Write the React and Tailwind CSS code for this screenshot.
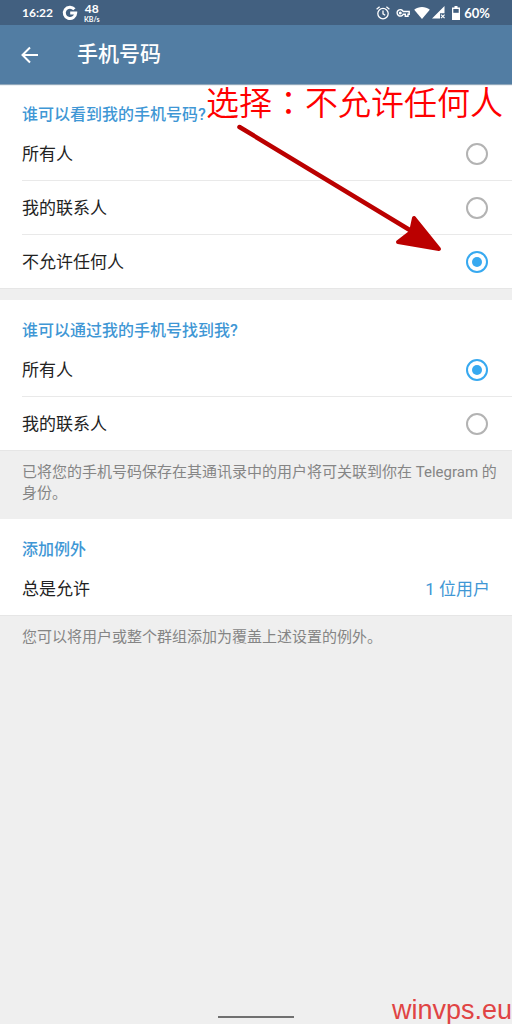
import { useState } from 'react';

function StatusBar() {
  return (
    <div className="flex h-[25px] items-center justify-between bg-[#426080] px-[22px] font-['Lato','Noto_Sans_CJK_SC',sans-serif] text-xs font-bold text-white">
      <div className="flex items-center">
        <span className="w-10 text-xs leading-4">16:22</span>
        <svg className="size-4" viewBox="0 0 16 16" fill="none" stroke="#fff" strokeWidth="3" aria-hidden="true">
          <path d="M12.4 4.2A5.7 5.7 0 1 0 13.7 8H8.2" />
        </svg>
        <span className="ml-1.5 flex flex-col items-center">
          <span className="text-xs leading-3">48</span>
          <span className="text-[7px] leading-[8px]">KB/s</span>
        </span>
      </div>
      <div className="flex items-center">
        <svg className="size-[14px]" viewBox="0 0 14 14" fill="none" stroke="#fff" strokeWidth="1.3" aria-hidden="true">
          <circle cx="7" cy="7.6" r="5.2" />
          <path d="M7 4.6v3.3l2.2 1.4M.6 3.3 3.6.8M13.400 3.300 10.400.8" />
        </svg>
        <svg className="ml-1.5 h-2.5 w-[14px]" viewBox="0 0 14 10" fill="none" stroke="#fff" strokeWidth="1.4" aria-hidden="true">
          <path d="M7.2 3.5H13.2V6.2H12V8.2H9.3V6.2H7.2A3.2 3.2 0 1 1 7.2 3.5Z" />
          <circle cx="4.3" cy="5" r=".8" />
        </svg>
        <svg className="ml-1 h-3 w-4" viewBox="0 0 16 12" fill="#fff" aria-hidden="true">
          <path d="M8 12 .2 2.700C4.600-.800 11.400-.800 15.800 2.700Z" />
        </svg>
        <svg className="ml-0.5 size-[13px]" viewBox="0 0 13 13" aria-hidden="true">
          <path d="M12.500 0V7.200H8V12.500H0Z" fill="#fff" />
          <path d="m9 8.600 3.600 3.600m0-3.600L9 12.200" stroke="#fff" strokeWidth="1.200" />
        </svg>
        <svg className="ml-[7px] h-[14px] w-2" viewBox="0 0 8 14" aria-hidden="true">
          <path d="M2.500 0h3v1.400H8V14H0V1.400h2.500Z" fill="#fff" />
          <path d="M1.300 3h5.400v3.800H1.300Z" fill="#426080" />
        </svg>
        <span className="ml-1 text-[13px] leading-4">60%</span>
      </div>
    </div>
  );
}

function Section({ title, children }) {
  return (
    <section className="border-b border-[#e6e6e6] bg-white">
      <h2 className="px-[22px] pt-[19px] text-base leading-6 font-medium text-[#3f97d5]">{title}</h2>
      {children}
    </section>
  );
}

function Choices({ name, title, options, initial }) {
  const [value, setValue] = useState(initial);
  return (
    <Section title={title}>
      <div className="divide-y divide-[#e9e9e9] pl-[22px]" role="radiogroup" aria-label={title}>
        {options.map((option) => (
          <label key={option} className="flex h-[53px] items-center justify-between pr-6 text-[17px] text-[#222] not-last:box-content">
            <span className="pt-0.5">{option}</span>
            <input
              type="radio"
              name={name}
              checked={value === option}
              onChange={() => setValue(option)}
              className="grid size-[22px] appearance-none place-items-center rounded-full border-2 border-[#b3b3b3] before:size-2.5 before:rounded-full checked:border-[#37a9f0] checked:before:bg-[#37a9f0]"
            />
          </label>
        ))}
      </div>
    </Section>
  );
}

function Annotation() {
  return (
    <div className="pointer-events-none absolute top-0 right-0 w-[306px]">
      <p className="text-[33px] leading-10 whitespace-nowrap text-[#ff0000] font-[350]">
        选择<span lang="zh-TW" className="font-['Noto_Sans_CJK_TC',sans-serif] leading-none">：</span>不允许任何人
      </p>
      <svg className="absolute top-10 left-[31px] h-[128px] w-[205px]" viewBox="0 0 205 128" aria-hidden="true">
        <path d="M2.500 3 176 108" stroke="#bb0000" strokeWidth="4.500" strokeLinecap="round" />
        <path d="M177 94 202 125 161 118 174 108Z" fill="#bb0000" stroke="#bb0000" strokeWidth="4" strokeLinejoin="round" />
      </svg>
    </div>
  );
}

export default function App() {
  return (
    <div className="relative flex min-h-screen flex-col bg-[#efefef] font-['Roboto','Noto_Sans_CJK_SC',sans-serif]" lang="zh-CN">
      <StatusBar />
      <header className="relative z-10 flex h-[59px] items-center bg-[#527da3] pl-[21px] text-white shadow-[0_1px_1px_#8fa6ba]">
        <button type="button" aria-label="返回" className="size-[18px]">
          <svg viewBox="0 0 18 18" fill="none" stroke="#fff" strokeWidth="2" aria-hidden="true">
            <path d="M17 9H2M9 1.500 1.500 9 9 16.500" />
          </svg>
        </button>
        <h1 className="ml-[38px] text-[21px] font-medium">手机号码</h1>
      </header>
      <main className="relative">
        <Choices name="visibility" title="谁可以看到我的手机号码?" options={['所有人', '我的联系人', '不允许任何人']} initial="不允许任何人" />
        <div className="h-[11px]" />
        <Choices name="discovery" title="谁可以通过我的手机号找到我?" options={['所有人', '我的联系人']} initial="所有人" />
        <p className="pt-[11px] pr-2 pb-[15px] pl-[22px] text-[15px] leading-[21px] text-[#858585]">
          已将您的手机号码保存在其通讯录中的用户将可关联到你在 Telegram 的身份。
        </p>
        <Section title="添加例外">
          <button type="button" className="flex h-[53px] w-full items-center justify-between px-[22px] pt-0.5 text-[17px] text-[#222]">
            <span>总是允许</span>
            <span className="text-[#3f97d5]">1 位用户</span>
          </button>
        </Section>
        <p className="pt-[11px] pr-2 pl-[22px] text-[15px] leading-[21px] text-[#858585]">您可以将用户或整个群组添加为覆盖上述设置的例外。</p>
        <Annotation />
      </main>
      <footer className="relative mt-auto flex h-8 items-end justify-center pb-1.5">
        <div className="h-0.5 w-[76px] bg-[#707070]" />
        <a href="#winvps" className="absolute right-0 bottom-0 font-['Liberation_Sans',sans-serif] text-[27px] leading-7 text-[#e04444]">winvps.eu</a>
      </footer>
    </div>
  );
}
